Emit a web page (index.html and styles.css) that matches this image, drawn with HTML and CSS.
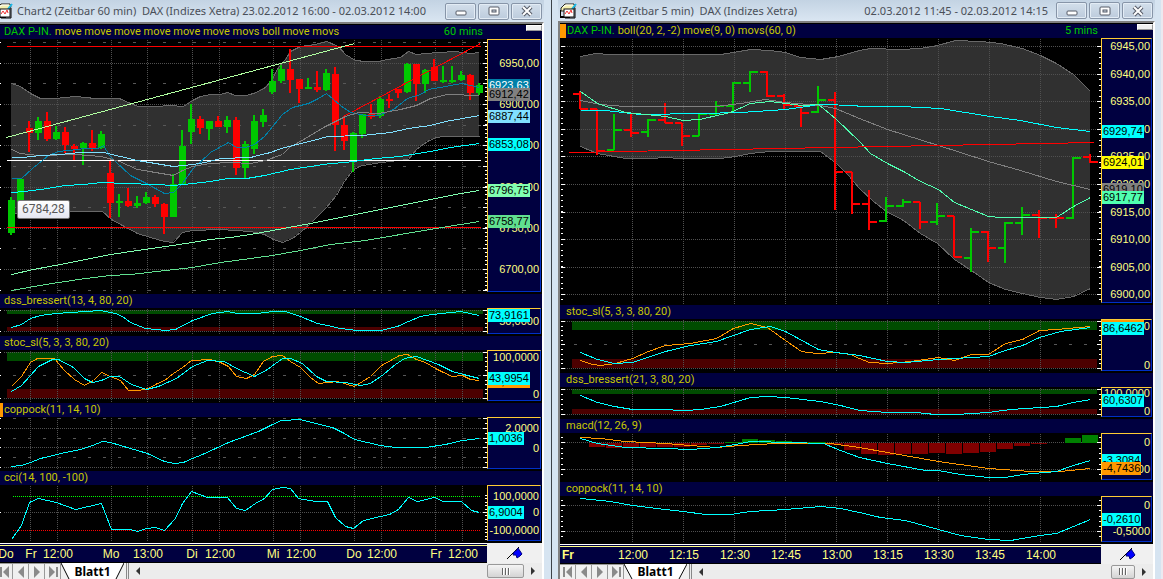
FILE: index.html
```html
<!DOCTYPE html>
<html lang="de">
<head>
    <meta charset="UTF-8">
    <title>DAX Charts</title>

    <link rel="stylesheet" href="styles.css">
</head>

<body>

<svg class="sprite" aria-hidden="true">
    <symbol id="icon-chart" viewBox="0 0 17 16">
        <path d="M1 5L5 1H14L15 4L12 8H1Z" fill="#f4efb0" stroke="#222"/>
        <path d="M3 4L6 2H13" stroke="#fff" fill="none"/>
        <path d="M0 7V14H10" stroke="#000" stroke-width="2" fill="none"/>
        <path d="M16 1L12 6" stroke="#18b8e8" stroke-width="2"/>
        <rect x="4" y="6" width="10" height="8" fill="#fff" stroke="#111"/>
        <path d="M5 11L7 8L9 11L11 7L12 10" stroke="#e33" fill="none"/>
        <path d="M15 5V15H5" stroke="#000" fill="none"/>
    </symbol>
    <symbol id="icon-pin" viewBox="0 0 17 14">
        <path d="M1 13L13 1" stroke="#000" fill="none"/>
        <path d="M8 6L11 4L12 2L14 5L16 8L14 10L11 12L10 9L7 9Z" fill="#00f" stroke="#000080"/>
    </symbol>
    <symbol id="icon-min" viewBox="0 0 12 12">
        <rect x="1" y="6" width="10" height="4" rx="1" fill="#fff" stroke="#555a66"/>
    </symbol>
    <symbol id="icon-max" viewBox="0 0 12 12">
        <rect x="1" y="2" width="10" height="8" rx="1" fill="#fff" stroke="#555a66"/>
        <rect x="4" y="5" width="4" height="2" fill="#cdd8e4" stroke="#555a66"/>
    </symbol>
    <symbol id="icon-close" viewBox="0 0 12 12">
        <path d="M2 2L10 10M10 2L2 10" stroke="#555a66" stroke-width="4"/>
        <path d="M2 2L10 10M10 2L2 10" stroke="#fff" stroke-width="2"/>
    </symbol>
    <symbol id="icon-first" viewBox="0 0 10 12">
        <path d="M1 1V11" stroke="#8a8a8a" stroke-width="2"/><path d="M9 0V12L3 6Z" fill="#8a8a8a"/>
    </symbol>
    <symbol id="icon-prev" viewBox="0 0 10 12"><path d="M8 0V12L2 6Z" fill="#8a8a8a"/></symbol>
    <symbol id="icon-next" viewBox="0 0 10 12"><path d="M2 0V12L8 6Z" fill="#8a8a8a"/></symbol>
    <symbol id="icon-last" viewBox="0 0 10 12">
        <path d="M9 1V11" stroke="#8a8a8a" stroke-width="2"/><path d="M1 0V12L7 6Z" fill="#8a8a8a"/>
    </symbol>
    <symbol id="icon-left" viewBox="0 0 4 8"><path d="M4 0V8L0 4Z" fill="#333"/></symbol>
    <symbol id="icon-right" viewBox="0 0 4 8"><path d="M0 0V8L4 4Z" fill="#333"/></symbol>
    <symbol id="icon-tab" viewBox="0 0 63 16" preserveAspectRatio="none">
        <path d="M0 0H63L55 16H8Z" fill="#fff"/>
        <path d="M0 0L8 16M63 0L55 16" stroke="#000" fill="none"/>
    </symbol>
</svg>

<div class="desktop">

    <section class="window window-hour">
        <header class="title-bar">
            <svg class="title-icon"><use href="#icon-chart"/></svg>
            <h1 class="title">Chart2 (Zeitbar 60 min)&nbsp; DAX (Indizes Xetra) 23.02.2012 16:00 - 02.03.2012 14:00</h1>
            <div class="title-buttons">
                <button aria-label="Minimieren"><svg><use href="#icon-min"/></svg></button>
                <button aria-label="Maximieren"><svg><use href="#icon-max"/></svg></button>
                <button aria-label="Schließen"><svg><use href="#icon-close"/></svg></button>
            </div>
        </header>

        <div class="client">
            <div class="panes" data-chart="hour">
                <div class="pane-head">
                    <span class="symbol">DAX P-IN.</span>
                    <span>move move move move move move movs boll move movs</span>
                    <span class="interval">60 mins</span>
                    <button class="pane-button" aria-label="Menü"></button>
                </div>
                <div class="pane" data-pane="0"><output class="value-tip">6784,28</output></div>
                <div class="pane-head">dss_bressert(13, 4, 80, 20)</div>
                <div class="pane" data-pane="1"></div>
                <div class="pane-head">stoc_sl(5, 3, 3, 80, 20)</div>
                <div class="pane" data-pane="2"></div>
                <div class="pane-head active">coppock(11, 14, 10)</div>
                <div class="pane" data-pane="3"></div>
                <div class="pane-head">cci(14, 100, -100)</div>
                <div class="pane" data-pane="4"></div>
            </div>

            <div class="time-row">
                <div class="time-axis" data-times="hour"></div>
                <div class="corner"><svg class="pin"><use href="#icon-pin"/></svg></div>
            </div>

            <footer class="sheet-bar">
                <nav class="sheet-nav">
                    <button aria-label="Erstes Blatt"><svg><use href="#icon-first"/></svg></button>
                    <button aria-label="Vorheriges Blatt"><svg><use href="#icon-prev"/></svg></button>
                    <button aria-label="Nächstes Blatt"><svg><use href="#icon-next"/></svg></button>
                    <button aria-label="Letztes Blatt"><svg><use href="#icon-last"/></svg></button>
                </nav>
                <button class="sheet-tab"><svg><use href="#icon-tab"/></svg><span>Blatt1</span></button>
                <div class="scroll">
                    <button class="scroll-arrow" aria-label="Links"><svg><use href="#icon-left"/></svg></button>
                    <button class="scroll-thumb" aria-label="Scrollen"><i></i><i></i><i></i></button>
                    <button class="scroll-arrow" aria-label="Rechts"><svg><use href="#icon-right"/></svg></button>
                </div>
            </footer>
        </div>
    </section>

    <section class="window window-five">
        <header class="title-bar">
            <svg class="title-icon"><use href="#icon-chart"/></svg>
            <h1 class="title">Chart3 (Zeitbar 5 min)&nbsp; DAX (Indizes Xetra)</h1>
            <span class="title-range">02.03.2012 11:45 - 02.03.2012 14:15</span>
            <div class="title-buttons">
                <button aria-label="Minimieren"><svg><use href="#icon-min"/></svg></button>
                <button aria-label="Maximieren"><svg><use href="#icon-max"/></svg></button>
                <button aria-label="Schließen"><svg><use href="#icon-close"/></svg></button>
            </div>
        </header>

        <div class="client">
            <div class="panes" data-chart="five">
                <div class="pane-head active">
                    <span class="symbol">DAX P-IN.</span>
                    <span>boll(20, 2, -2) move(9, 0) movs(60, 0)</span>
                    <span class="interval">5 mins</span>
                    <button class="pane-button" aria-label="Menü"></button>
                </div>
                <div class="pane" data-pane="0"></div>
                <div class="pane-head">stoc_sl(5, 3, 3, 80, 20)</div>
                <div class="pane" data-pane="1"></div>
                <div class="pane-head">dss_bressert(21, 3, 80, 20)</div>
                <div class="pane" data-pane="2"></div>
                <div class="pane-head">macd(12, 26, 9)</div>
                <div class="pane" data-pane="3"></div>
                <div class="pane-head">coppock(11, 14, 10)</div>
                <div class="pane" data-pane="4"></div>
            </div>

            <div class="time-row">
                <div class="time-axis" data-times="five"></div>
                <div class="corner"><svg class="pin"><use href="#icon-pin"/></svg></div>
            </div>

            <footer class="sheet-bar">
                <nav class="sheet-nav">
                    <button aria-label="Erstes Blatt"><svg><use href="#icon-first"/></svg></button>
                    <button aria-label="Vorheriges Blatt"><svg><use href="#icon-prev"/></svg></button>
                    <button aria-label="Nächstes Blatt"><svg><use href="#icon-next"/></svg></button>
                    <button aria-label="Letztes Blatt"><svg><use href="#icon-last"/></svg></button>
                </nav>
                <button class="sheet-tab"><svg><use href="#icon-tab"/></svg><span>Blatt1</span></button>
                <div class="scroll">
                    <button class="scroll-arrow" aria-label="Links"><svg><use href="#icon-left"/></svg></button>
                    <button class="scroll-thumb" aria-label="Scrollen"><i></i><i></i><i></i></button>
                    <button class="scroll-arrow" aria-label="Rechts"><svg><use href="#icon-right"/></svg></button>
                </div>
            </footer>
        </div>
    </section>

</div>

<script src="charts.js"></script>

</body>
</html>
```

FILE: styles.css
```css
* {
    box-sizing: border-box;
}

body {
    margin: 0;
    background: #d6e3f0;
    font-family: "Liberation Sans", Arial, sans-serif;
    font-size: 11px;
}

button {
    margin: 0;
    padding: 0;
    border: 0;
    background: none;
    font: inherit;
}

.sprite {
    display: none;
}

.desktop {
    display: grid;
    grid-template-columns: 551fr 612fr;
    height: 100vh;
}

.window {
    display: flex;
    flex-direction: column;
    min-width: 0;
    min-height: 0;
    background: #d6e4f1;
}

.window-hour {
    --axis: 54px;
    --bar: 16px;
    padding-right: 7px;
}

.window-five {
    --axis: 51px;
    --bar: 15px;
    padding: 0 6px;
    border-left: 1px solid #3c4248;
    border-right: 2px solid #ece9f0;
}

/* title bar */

.title-bar {
    display: flex;
    flex: 0 0 22px;
    align-items: center;
    padding-right: 2px;
    background: linear-gradient(#c3d3e3, #dae6f2);
    color: #4a4f58;
}

.window-five .title-bar {
    flex-basis: 21px;
}

.title-icon {
    flex: none;
    width: 17px;
    height: 16px;
}

.window-hour .title-icon {
    margin-left: -4px;
}

.window-five .title-icon {
    margin-left: 2px;
}

.title,
.title-range {
    margin: 0 0 0 4px;
    font-family: "Noto Sans", "Open Sans", sans-serif;
    font-size: 11px;
    font-weight: normal;
    line-height: 18px;
    white-space: nowrap;
}

.title {
    flex: 1;
    min-width: 0;
}

.title-range {
    margin-right: 8px;
}

.title-buttons {
    display: flex;
    flex: none;
    gap: 2px;
}

.title-buttons button {
    display: flex;
    align-items: center;
    justify-content: center;
    width: 31px;
    height: 17px;
    border: 1px solid #8795a8;
    border-radius: 2px;
    background: linear-gradient(#d3dfeb, #bccbdc);
    box-shadow: inset 0 0 0 1px #e3ecf5;
}

.title-buttons svg {
    width: 12px;
    height: 12px;
}

/* client area */

.client {
    display: flex;
    flex: 1;
    flex-direction: column;
    min-height: 0;
    padding-top: 1px;
    border-top: 2px solid #808080;
    border-right: 2px solid #fff;
    background: #000;
}

.window-five .client {
    border-left: 2px solid #808080;
}

.panes {
    display: flex;
    flex: 1;
    flex-direction: column;
    min-height: 0;
}

.pane-head {
    display: flex;
    flex: 0 0 14px;
    gap: 3px;
    padding-left: 4px;
    background: #000040;
    color: #c8c800;
    font-family: Roboto, sans-serif;
    font-size: 11px;
    line-height: 14px;
    white-space: nowrap;
}

.window-five .pane-head {
    padding-left: 6px;
}

.pane-head.active {
    border-left: 3px solid #ff9800;
    padding-left: 1px;
}

.window-five .pane-head.active {
    border-left-width: 6px;
    padding-left: 1px;
}

.symbol,
.interval {
    color: #00c800;
}

.interval {
    margin-left: auto;
}

.pane-button {
    width: 16px;
    height: 6px;
    margin-left: 40px;
    border: 1px solid #fff;
    border-right-color: #999;
    border-bottom-color: #999;
    background: #f0f0f0;
}

.window-five .pane-button {
    margin-left: 36px;
}

.pane {
    position: relative;
    display: flex;
    min-height: 0;
    padding-right: 1px;
}

.plot {
    flex: 1;
    min-width: 0;
    width: 100%;
    height: 100%;
    shape-rendering: crispEdges;
}

.plot path,
.plot polyline {
    fill: none;
    vector-effect: non-scaling-stroke;
}

.plot .band {
    fill: #303030;
}

.scale {
    position: relative;
    flex: 0 0 var(--axis);
    margin-bottom: 2px;
    border: 1px solid #0030c8;
    border-top-color: #ffcc33;
    border-left-color: #ffcc33;
    background: #000040;
    overflow: hidden;
}

.scale span {
    position: absolute;
    right: 1px;
    height: 12px;
    margin-top: -6px;
    color: #ffff80;
    line-height: 12px;
}

.scale .tag {
    right: auto;
    left: 0;
    height: 13px;
    padding: 0 1px;
    color: #000;
    line-height: 13px;
}

.value-tip {
    position: absolute;
    z-index: 1;
    top: 63%;
    left: 17px;
    padding: 0 4px;
    border: 1px solid #767676;
    border-radius: 2px;
    background: linear-gradient(#fff, #e4e5f0);
    color: #575757;
    font-family: Roboto, sans-serif;
    font-size: 12px;
    line-height: 17px;
}

/* time axis */

.time-row {
    display: flex;
    flex: 0 0 20px;
}

.time-axis {
    position: relative;
    flex: 1;
    border-top: 1px solid #fff;
    border-bottom: 1px solid #000;
    background: linear-gradient(#000040 1px, #ffff80 1px, #ffff80 2px, #000040 2px);
    color: #ffff80;
    font-size: 12px;
    line-height: 18px;
    overflow: hidden;
}

.time-axis span {
    position: absolute;
    top: 1px;
    transform: translateX(-50%);
}

.time-axis .day {
    font-weight: bold;
}

.corner {
    display: flex;
    flex: 0 0 calc(var(--axis) + 1px);
    align-items: center;
    justify-content: center;
    background: #f0f0f0;
}

.pin {
    width: 17px;
    height: 14px;
}

/* sheet bar */

.sheet-bar {
    display: flex;
    flex: 0 0 var(--bar);
    background: #f0f0f0;
    overflow: hidden;
}

.sheet-nav {
    display: flex;
}

.window-hour .sheet-nav {
    margin-left: -3px;
}

.sheet-nav button {
    display: flex;
    align-items: center;
    justify-content: center;
    width: 16px;
    border-top: 1px solid #999;
    border-right: 1px solid #999;
}

.sheet-nav svg {
    width: 10px;
    height: 12px;
}

.sheet-tab {
    position: relative;
    width: 63px;
}

.sheet-tab svg {
    position: absolute;
    inset: 0;
    width: 100%;
    height: 100%;
}

.sheet-tab span {
    position: relative;
    font-family: "Noto Sans", sans-serif;
    font-size: 12px;
    font-weight: bold;
    line-height: 15px;
}

.scroll {
    display: flex;
    flex: 1;
    align-items: center;
    margin-left: 2px;
    border-left: 3px double #888;
    background: #ececec;
}

.scroll-arrow {
    display: flex;
    justify-content: center;
    width: 18px;
}

.scroll-arrow svg {
    width: 4px;
    height: 8px;
}

.scroll-thumb {
    display: flex;
    gap: 1px;
    align-items: center;
    justify-content: center;
    width: 37px;
    height: 14px;
    margin-left: auto;
    border: 1px solid #999;
    border-radius: 2px;
    background: linear-gradient(#f4f4f4, #d4d4d4);
}

.window-five .scroll-thumb {
    width: 24px;
}

.scroll-thumb i {
    width: 2px;
    height: 7px;
    border-left: 1px solid #666;
    background: #fff;
}
```

FILE: charts.js
```javascript
"use strict"

const GREEN = "#00c800", RED = "#ff0000", CYAN = "#00ffff", ORANGE = "#ff9800", GRAY = "#808080";
const MINT = "#50ffb0", BLUE = "#0080a8", SKY = "#80e0ff", GREEN1 = "#80ffb0", GREEN2 = "#60e090";

// x of the bar, high, low, body top, body bottom; g = up, r = down
const candles = `11 197 235 200 233 g|20 179 205 179 205 g|29 121 152 128 133 r|38 117 140 121 133 g|47 112 141 121 139 r
56 126 140 132 139 g|65 127 153 132 145 r|74 144 160 146 149 r|83 142 165 143 148 g|92 130 151 143 148 r|101 131 149 134 148 g
110 161 218 173 203 r|119 194 217 201 203 g|128 188 207 201 206 r|137 196 208 203 206 g|146 192 204 197 203 g|155 195 207 197 204 r
164 203 234 204 217 r|173 174 217 184 217 g|182 130 184 146 184 g|191 104 144 119 132 g|200 116 134 119 128 r|209 121 140 121 129 g
218 116 127 121 127 r|227 116 133 120 127 g|236 117 175 120 168 r|245 141 178 144 168 g|254 115 154 121 149 g|263 109 127 115 122 g
272 69 94 81 92 g|281 65 83 69 81 g|290 49 93 69 80 r|299 79 103 79 89 r|308 78 89 87 89 g|317 71 92 87 90 r|326 69 91 73 90 g
335 67 151 74 125 r|344 117 150 125 141 r|353 132 172 133 160 g|362 114 138 114 134 g|371 104 119 114 117 r|380 96 118 99 116 g
389 94 108 99 101 r|398 89 98 89 93 r|407 63 93 64 92 g|416 64 101 64 84 r|425 69 93 70 84 g|434 59 81 67 81 r|443 66 83 80 82 g
452 66 83 80 82 g|461 71 81 75 80 g|470 74 100 75 93 r|479 83 95 85 93 g`;

// x of the bar, open, high, low, close
const bars = `580 94 91 109 109 r|597 109 109 155 151 r|614 150 114 150 130 g|631 130 114 137 133 r|648 132 119 137 120 g
665 120 103 123 123 r|682 123 123 146 136 r|699 136 114 136 114 g|716 114 101 115 106 g|733 106 82 111 83 g|750 83 71 92 72 g
767 72 71 97 96 r|784 96 94 109 105 r|801 106 105 127 113 r|818 112 86 113 100 g|835 100 92 210 172 r|852 172 172 214 204 r
869 204 190 230 222 r|886 221 197 222 206 g|903 206 199 207 202 g|920 202 202 229 222 r|937 222 203 225 216 g|954 216 216 257 257 r
971 258 228 272 232 g|988 232 231 262 248 r|1005 248 222 263 223 g|1022 223 207 235 215 g|1039 215 210 238 218 r
1056 218 214 228 218 r|1073 218 157 219 158 g|1090 157 154 163 162 r`;

const charts = {
    hour: {
        left: 0, right: 487, bandLeft: 7, bandRight: 483, edge: 0,
        grid: [30, 57, 111, 147, 192, 219, 273, 300, 354, 381, 435, 462],
        times: [[6, "Do"], [31, "Fr"], [58, "12:00"], [111, "Mo"], [148, "13:00"], [192, "Di"], [220, "12:00"], [273, "Mi"],
            [301, "12:00"], [354, "Do"], [382, "12:00"], [436, "Fr"], [463, "12:00"]],
        panes: [{
            top: 39, bottom: 294,
            dots: [63, 104, 145, 187, 228, 269], dashes: [42, 83, 125, 166, 207, 248, 290], ticks: [42, 4.12],
            upper: "11,83 20,86 30,93 40,98 55,98 75,96 95,98 119,98 130,103 138,106 155,106 170,105 183,106 192,100 200,96 210,94 220,94 227,92 235,95 246,95 256,92 265,87 271,80 278,67 285,59 290,51 300,46 315,44 326,41 338,46 345,54 355,60 365,61 378,61 387,59 400,57 408,51 416,54 425,53 438,52 455,51 470,53 479,52",
            lower: "11,214 20,212 68,211 102,211 111,219 122,225 137,233 150,237 164,241 173,242 182,232 192,230 220,229 250,231 264,234 273,239 282,242 292,238 300,232 311,222 326,207 336,195 344,181 353,169 362,165 381,162 398,160 408,159 416,149 427,141 436,137 444,136 479,136",
            candles: candles,
            lines: [
                ["#fff", "6,160 480,160"], [RED, "6,46 480,46"], [RED, "6,227 480,227"], ["#b0ffa0", "6,137 354,43"], [RED, "343,116 480,43"],
                [BLUE, "11,178 21,178 32,168 48,155 58,151 78,149 84,148 98,148 103,145 109,155 115,161 130,175 146,183 155,188 164,193 173,192 182,183 192,169 210,152 228,142 236,147 245,147 254,144 264,136 273,125 282,114 292,107 308,103 318,98 326,93 340,105 350,112 365,115 378,115 393,109 407,98 420,94 428,89 445,86 461,83 479,87"],
                [GRAY, "11,149 20,153 38,155 75,154 101,156 119,161 137,169 155,172 173,175 182,170 192,166 210,163 230,162 250,163 265,160 282,154 289,147 305,138 325,126 345,116 358,112 378,113 400,109 416,105 430,98 447,94 479,95"],
                [SKY, "11,157 22,157 40,155 60,154 80,152 103,152 120,156 137,160 155,163 173,166 192,164 205,162 220,158 250,157 270,152 281,148 292,145 313,140 327,136 362,135 390,132 408,128 430,125 445,121 479,115"],
                [CYAN, "11,192 24,191 47,188 65,185 83,184 101,182 125,183 155,184 173,185 192,183 210,181 228,178 246,178 264,175 290,169 310,166 330,163 345,162 375,158 400,156 430,151 450,147 479,143"],
                [GREEN1, "11,274 33,269 60,264 85,259 110,254 137,250 165,246 192,242 210,239 230,237 250,234 272,230 310,223 345,216 380,209 410,203 440,197 460,193 479,190"],
                [GREEN2, "11,290 45,284 85,278 110,275 130,274 165,270 192,267 220,262 250,258 272,255 300,250 330,244 365,240 400,234 430,229 460,224 479,221"]
            ],
            labels: [[63, "6950,00"], [104, "6900,00"], [145, "6850,00"], [187, "6800,00"], [228, "6750,00"], [269, "6700,00"]],
            tags: [[85, "6923,63", BLUE, "#fff"], [94, "6912,42", GRAY], [116, "6887,44", SKY], [144, "6853,08", CYAN], [190, "6796,75", GREEN1], [221, "6758,77", GREEN2]]
        }, {
            top: 308, bottom: 336, dots: [310, 331], dashes: [], ticks: [310, 4.2], zones: [310, 314, 327, 331],
            lines: [[CYAN, "11,327 21,324 30,318 40,315 55,313 70,312 100,310 115,313 122,316 130,322 145,328 165,330 175,329 192,320 212,313 227,311 237,313 257,313 272,311 285,311 300,316 317,323 327,325 340,328 357,330 380,330 397,326 408,321 420,316 432,314 460,311 479,315"]],
            labels: [[321, "50,0000"]],
            tags: [[315, "73,9161", CYAN]]
        }, {
            top: 350, bottom: 403, dots: [352, 398], dashes: [375], ticks: [352, 4.6], zones: [352, 361, 389, 398],
            lines: [
                [ORANGE, "11,386 21,376 30,362 37,358 54,358 64,370 74,379 84,385 93,380 101,372 110,376 120,380 128,390 138,390 148,388 157,383 164,380 173,373 182,367 191,360 210,359 220,362 228,366 236,376 246,378 254,374 263,361 272,356 282,355 290,361 300,367 310,377 318,383 337,381 354,386 370,376 381,365 392,359 399,355 407,354 416,359 425,362 435,368 443,372 452,376 462,375 470,379 479,380"],
                [CYAN, "11,391 21,385 38,366 52,359 58,359 73,367 84,378 92,382 101,380 110,376 119,376 131,384 146,389 158,386 176,378 192,366 207,360 224,361 236,368 254,376 267,369 282,358 290,358 302,363 316,376 326,381 345,382 360,385 370,383 383,374 395,364 404,358 416,356 427,360 438,364 452,371 463,374 479,378"]
            ],
            labels: [[357, "100,0000"], [394, "0"]],
            tags: [[381, "41,9021", ORANGE], [378, "43,9954", CYAN]]
        }, {
            top: 417, bottom: 471, dots: [428, 447, 467], dashes: [418, 438, 457], ticks: [418, 4.9],
            lines: [[CYAN, "11,466 21,465 30,462 40,458 65,452 80,449 92,445 102,441 110,442 130,448 147,453 164,461 174,463 183,462 192,458 202,454 228,442 247,435 258,431 272,424 281,420 300,419 315,423 332,427 342,432 354,439 380,445 395,447 425,447 445,444 462,440 479,438"]],
            labels: [[428, "2,0000"], [448, "0"]],
            tags: [[438, "1,0036", CYAN]]
        }, {
            top: 485, bottom: 543, dots: [512], dashes: [], ticks: [495, 3.4], levels: [496, 530],
            lines: [[CYAN, "11,539 21,525 29,502 38,498 56,502 75,509 101,503 111,529 130,529 137,531 146,528 155,527 164,530 175,518 182,503 191,491 207,497 227,497 236,508 245,510 255,503 264,498 272,489 282,487 290,488 298,498 315,501 327,501 335,517 345,526 353,528 363,520 380,516 389,514 398,509 408,497 417,501 434,497 443,501 461,501 471,510 479,512"]],
            labels: [[496, "100,0000"], [512, "0"], [530, "-100,0000"]],
            tags: [[512, "6,9004", CYAN]]
        }]
    },
    five: {
        left: 560, right: 1101, bandLeft: 572, bandRight: 1097, edge: 561,
        grid: [632, 683, 734, 785, 836, 887, 938, 989, 1040],
        times: [[568, "Fr", "day"], [633, "12:00"], [684, "12:15"], [735, "12:30"], [786, "12:45"], [837, "13:00"],
            [888, "13:15"], [939, "13:30"], [990, "13:45"], [1041, "14:00"]],
        panes: [{
            top: 38, bottom: 305,
            dots: [46, 74, 101, 129, 156, 184, 212, 239, 267, 294], dashes: [], ticks: [46, 5.5],
            upper: "580,56 595,53 610,54 720,54 733,52 750,49 770,50 785,52 800,57 820,59 838,56 859,50 870,48 900,49 920,48 937,45 955,40 980,41 1000,43 1022,48 1040,55 1056,63 1073,74 1090,91",
            lower: "580,146 597,153 625,158 650,158 665,157 680,158 720,158 735,156 750,153 770,151 820,151 836,163 848,175 859,188 873,201 886,211 903,220 920,233 937,243 954,259 971,270 988,282 1005,289 1022,293 1040,297 1056,299 1073,296 1090,288",
            bars: bars,
            lines: [
                [CYAN, "580,110 605,110 640,114 700,113 740,112 785,109 820,104 855,105 859,106 900,106 940,108 990,116 1020,120 1056,127 1090,131"],
                [GRAY, "580,100 600,104 625,106 715,106 740,103 765,99 785,102 820,105 835,108 859,118 887,129 938,145 988,161 1020,170 1056,181 1090,189"],
                [MINT, "580,91 597,103 625,112 665,116 683,120 699,119 730,112 750,103 770,101 801,105 818,104 835,118 859,141 870,153 887,163 903,171 920,181 938,189 954,202 971,209 988,216 1000,217 1056,217 1073,206 1090,197"],
                [RED, "569,152 1094,142"]
            ],
            labels: [[46, "6945,00"], [74, "6940,00"], [101, "6935,00"], [129, "6930,00"], [156, "6925,00"], [184, "6920,00"],
                [212, "6915,00"], [239, "6910,00"], [267, "6905,00"], [294, "6900,00"]],
            tags: [[131, "6929,74", CYAN], [162, "6924,01", "#ffff00"], [189, "6919,10", GRAY], [197, "6917,77", MINT]]
        }, {
            top: 319, bottom: 373, dots: [321, 368], dashes: [344], ticks: [321, 4.7], zones: [321, 330, 359, 368],
            lines: [
                [ORANGE, "580,360 592,364 600,365 615,363 632,358 648,351 665,345 690,343 716,338 733,328 750,323 767,327 785,340 801,351 816,353 835,352 850,354 859,358 869,362 887,363 910,361 938,357 954,360 971,354 988,354 1005,343 1022,339 1039,330 1056,329 1090,326"],
                [CYAN, "580,352 597,359 614,363 632,362 665,351 690,345 716,341 750,329 770,326 785,331 818,349 835,352 859,355 887,361 905,362 938,359 988,356 1005,350 1022,345 1039,337 1060,331 1090,327"]
            ],
            labels: [[326, "100,0000"], [365, "0"]],
            tags: [[326, "88,2140", ORANGE], [328, "86,6462", CYAN]]
        }, {
            top: 387, bottom: 419, dots: [389, 414], dashes: [], ticks: [389, 5], zones: [389, 394, 409, 414],
            lines: [[CYAN, "580,395 597,402 614,406 632,409 660,409 685,410 700,409 720,406 750,397 768,396 785,397 820,401 840,405 859,410 887,412 915,412 935,414 955,414 988,412 1010,409 1056,406 1073,402 1090,399"]],
            labels: [[393, "100,0000"], [411, "0"]],
            tags: [[400, "60,6307", CYAN]]
        }, {
            top: 433, bottom: 482, dots: [442, 469], dashes: [], ticks: [437, 5.3], zero: 443,
            histogram: [447, 448, 447, 447, 447, 447, 445, 444, 442, 439, 440, 441, 442, 442, 445, 450, 454, 455, 454, 454, 453, 454, 453, 452, 449, 446, 444, 443, 438, 435],
            lines: [
                [ORANGE, "580,437 600,438 625,441 665,443 690,445 716,447 740,445 775,443 800,443 830,443 859,447 887,452 938,461 988,468 1030,471 1060,471 1090,468"],
                [CYAN, "580,438 597,443 625,447 665,448 690,449 716,447 735,444 750,441 790,442 823,443 840,450 859,457 887,463 925,470 938,470 960,474 988,477 1005,477 1022,474 1056,471 1073,465 1090,460"]
            ],
            labels: [[442, "0"], [469, "-5,0000"]],
            tags: [[460, "-3,3084", CYAN], [468, "-4,7436", ORANGE]]
        }, {
            top: 496, bottom: 544, dots: [505, 531], dashes: [], ticks: [500, 5.2],
            lines: [[CYAN, "580,498 610,501 632,505 665,509 683,511 705,514 730,514 750,511 785,509 820,506 840,508 859,512 880,517 905,520 938,529 960,535 988,539 1010,540 1040,535 1056,533 1073,526 1090,519"]],
            labels: [[505, "0"], [531, "-0,5000"]],
            tags: [[519, "-0,2610", CYAN]]
        }]
    }
};

function rect(x, y, w, h, fill) {
    return `<rect x="${x}" y="${y}" width="${w}" height="${h}" fill="${fill}"/>`;
}

function rows(text) {
    return text.split(/[|\n]/).map(row => row.trim().split(" "));
}

function drawCandles(text) {
    return rows(text).map(([x, high, low, top, bottom, dir]) => {
        const color = dir === "g" ? GREEN : RED;
        return rect(x - 1, high, 2, low - high, color) + rect(x - 3, top, 7, bottom - top, color);
    }).join("");
}

function drawBars(text) {
    return rows(text).map(([x, open, high, low, close, dir]) => {
        const color = dir === "g" ? GREEN : RED;
        return rect(x - 7, open - 1, 7, 2, color) + rect(x - 1, high, 2, low - high, color) + rect(x, close - 1, 8, 2, color);
    }).join("");
}

function drawPlot(chart, pane) {
    const width = chart.right - chart.left;
    let out = "";

    if (pane.upper) {
        const back = pane.lower.split(" ").reverse().join(" ");
        out += `<polygon class="band" points="${pane.upper} ${back}"/>`;
    }

    if (pane.zones) {
        const [g1, g2, r1, r2] = pane.zones;
        const w = chart.bandRight - chart.bandLeft;
        out += rect(chart.bandLeft, g1, w, g2 - g1, "#004c00") + rect(chart.bandLeft, r1, w, r2 - r1, "#4c0000");
    }

    // lines run through pixel centres
    out += `<g transform="translate(.5 .5)">`;
    chart.grid.forEach(x => out += `<path d="M${x} ${pane.top}V${pane.bottom - 2}" stroke="#505050" stroke-dasharray="1 1"/>`);
    pane.dots.forEach(y => out += `<path d="M${chart.edge + 3} ${y}H${chart.right - 5}" stroke="#505050" stroke-dasharray="1 1"/>`);
    pane.dashes.forEach(y => out += `<path d="M${chart.edge + 12} ${y}H${chart.right - 5}" stroke="#585858" stroke-dasharray="3 12"/>`);
    if (pane.levels) {
        out += `<path d="M12 ${pane.levels[0]}H480" stroke="#00ff00" stroke-dasharray="1 1"/>`;
        out += `<path d="M12 ${pane.levels[1]}H480" stroke="#ff0000" stroke-dasharray="1 1"/>`;
    }
    if (pane.upper) {
        out += `<polyline points="${pane.upper}" stroke="#686868"/><polyline points="${pane.lower}" stroke="#686868"/>`;
    }
    out += "</g>";

    if (pane.histogram) {
        pane.histogram.forEach((y, i) => {
            const x = 589 + i * 17;
            out += y > pane.zero ? rect(x, pane.zero, 16, y - pane.zero, "#800000") : rect(x, y, 16, pane.zero - y, "#008000");
        });
    }

    if (pane.candles) out += drawCandles(pane.candles);
    if (pane.bars) out += drawBars(pane.bars);

    out += `<g transform="translate(.5 .5)">`;
    pane.lines.forEach(([color, points]) => out += `<polyline points="${points}" stroke="${color}"/>`);
    out += "</g>";

    // scale ticks on both edges, longer ones where a grid line starts
    const [first, step] = pane.ticks;
    for (let y = first; y < pane.bottom - 3; y += step) {
        out += rect(chart.right - 2, Math.round(y), 2, 1, "#fff");
        if (chart.edge) out += rect(chart.edge, Math.round(y), 2, 1, "#fff");
    }
    pane.dots.concat(pane.dashes).forEach(y => {
        out += rect(chart.right - 4, y, 4, 1, "#fff") + rect(chart.edge, y, chart.edge ? 4 : 1, 1, "#fff");
    });

    return `<svg class="plot" viewBox="${chart.left} ${pane.top} ${width} ${pane.bottom - pane.top}" preserveAspectRatio="none">${out}</svg>`;
}

function drawScale(pane) {
    const height = pane.bottom - pane.top - 4;
    const percent = y => (y - pane.top - 1) / height * 100;
    let out = "";

    pane.labels.forEach(([y, text]) => out += `<span style="top:${percent(y)}%">${text}</span>`);
    pane.tags.forEach(([y, text, back, color]) => {
        out += `<span class="tag" style="top:${percent(y)}%;background:${back};color:${color || "#000"}">${text}</span>`;
    });

    return `<div class="scale">${out}</div>`;
}

Object.keys(charts).forEach(name => {
    const chart = charts[name];

    document.querySelectorAll(`[data-chart="${name}"] .pane`).forEach(element => {
        const pane = chart.panes[element.dataset.pane];
        element.style.flex = `${pane.bottom - pane.top} 1 0`;
        element.insertAdjacentHTML("beforeend", drawPlot(chart, pane) + drawScale(pane));
    });

    document.querySelector(`[data-times="${name}"]`).innerHTML = chart.times.map(([x, text, type]) => {
        const left = (x - chart.left) / (chart.right - chart.left) * 100;
        return `<span class="${type || ""}" style="left:${left}%">${text}</span>`;
    }).join("");
});
```
